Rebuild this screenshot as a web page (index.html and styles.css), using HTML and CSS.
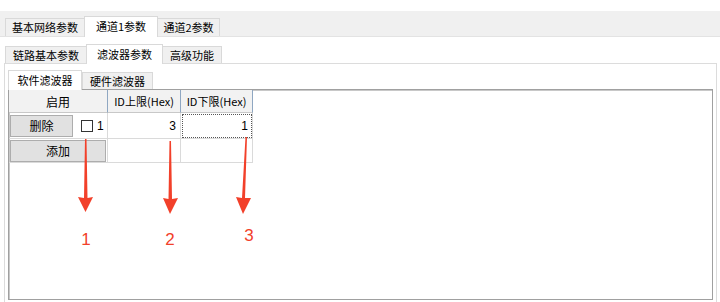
FILE: index.html
```html
<!DOCTYPE html>
<html>
<head>
  <meta charset="utf-8">
  <title>通道1参数</title>
  <link rel="stylesheet" href="styles.css">
</head>
<body>
  <div class="top-gap"></div>

  <div class="tabs tabs-main">
    <div class="tab">基本网络参数</div>
    <div class="tab active">通道1参数</div>
    <div class="tab">通道2参数</div>
  </div>

  <div class="page">
    <div class="tabs tabs-sub">
      <div class="tab">链路基本参数</div>
      <div class="tab active">滤波器参数</div>
      <div class="tab">高级功能</div>
    </div>

    <div class="panel">
      <div class="tabs tabs-filter">
        <div class="tab active">软件滤波器</div>
        <div class="tab">硬件滤波器</div>
      </div>

      <div class="grid-box">
        <div class="grid">
          <div class="hd">启用</div>
          <div class="hd sep">ID上限(Hex)</div>
          <div class="hd sep">ID下限(Hex)</div>

          <div class="cell first">
            <button class="btn small">删除</button>
            <span class="check"></span>
            <span class="idx">1</span>
          </div>
          <div class="cell num">3</div>
          <div class="cell num focus">1</div>

          <div class="cell first">
            <button class="btn wide">添加</button>
          </div>
          <div class="cell"></div>
          <div class="cell"></div>
        </div>
      </div>
    </div>
  </div>

  <!-- annotations drawn on top of the screenshot -->
  <svg class="marks" width="720" height="302" viewBox="0 0 720 302">
    <g fill="#f2402a">
      <polygon points="85,139 86.5,139 87.5,198 93,197 85.5,212 78,197 84,198"/>
      <polygon points="169.5,141 171,141 172,199 178,198 170,214 163,198 168.5,199"/>
      <polygon points="245.5,137 247,137 245,198 251,198 243,214 236,197 242,198"/>
    </g>
    <g class="num-label" fill="#f2402a">
      <text x="86" y="245">1</text>
      <text x="170" y="245">2</text>
      <text x="249" y="241">3</text>
    </g>
  </svg>
</body>
</html>
```

FILE: styles.css
```css
body {
  margin: 0;
  background: #fff;
  font-family: "Noto Sans CJK SC", "Microsoft YaHei", sans-serif;
  font-size: 11px;
  color: #000;
  position: relative;
  height: 302px;
  overflow: hidden;
}

.top-gap {
  height: 11px;
}

.tabs {
  display: flex;
  align-items: flex-end;
}
.tab {
  height: 17px;
  line-height: 17px;
  border: 1px solid #d9d9d9;
  border-bottom: none;
  background: #f0f0f0;
  white-space: nowrap;
  text-align: center;
  box-sizing: border-box;
}
.tab.active {
  height: 20px;
  line-height: 19px;
  background: #fff;
  margin: 0 -1px -1px;
  position: relative;
  z-index: 1;
}

.tabs-main {
  height: 26px;
  background: #f0f0f0;
  padding-left: 5px;
  border-bottom: 1px solid #e3e3e3;
  box-sizing: border-box;
}
.tabs-main .tab { width: 80px; height: 18px; }
.tabs-main .tab.active { width: 74px; height: 21px; }
.tabs-main .tab:last-child { width: 63px; }

.page {
  padding: 8px 3px 0 4px;
}

.tabs-sub {
  height: 18px;
  padding-left: 1px;
}
.tabs-sub .tab { width: 82px; }
.tabs-sub .tab.active { width: 77px; }
.tabs-sub .tab:last-child { width: 60px; }

.panel {
  border: 1px solid #dcdcdc;
  border-bottom: none;
  padding: 7px 3px 4px 3px;
  height: 239px;
  box-sizing: border-box;
}

.tabs-filter {
  height: 18px;
}
.tabs-filter .tab { width: 71px; }
.tabs-filter .tab.active { width: 74px; margin: 0 0 -1px 0; }

.grid-box {
  height: 209px;
  border: 1px solid #a0a0a0;
  box-shadow: inset 1px 1px 0 #c8c8c8;
  background: #fff;
}

.grid {
  display: grid;
  grid-template-columns: 99px 73px 72px;
  grid-template-rows: 23px 26px 24px;
}

.hd {
  display: flex;
  align-items: center;
  justify-content: center;
  background: #f2f2f2;
  border-bottom: 1px solid #c8c8c8;
  border-right: 1px solid #d4d4d4;
  font-size: 12px;
}
.hd.sep {
  border-left: 1px solid #8fa7c2;
  border-right: 1px solid #8fa7c2;
  margin-left: -1px;
  font-size: 11px;
}

.cell {
  border-right: 1px solid #dadada;
  border-bottom: 1px solid #dadada;
  display: flex;
  align-items: center;
  padding: 0 4px;
  font-size: 12px;
}
.cell.first {
  padding: 0 1px;
}
.cell.num {
  justify-content: flex-end;
  font-family: "Liberation Sans", sans-serif;
}
.cell.focus {
  outline: 1px dotted #555;
  outline-offset: -2px;
}

.btn {
  font-family: "Noto Sans CJK SC", sans-serif;
  font-size: 12px;
  background: #e1e1e1;
  border: 1px solid #adadad;
  padding: 0;
  margin: 0;
  height: 22px;
  color: #000;
}
.btn.small {
  width: 63px;
}
.btn.wide {
  width: 97px;
}

.check {
  width: 10px;
  height: 10px;
  border: 1px solid #333;
  background: #fff;
  margin-left: 8px;
}
.idx {
  margin-left: 4px;
  font-family: "Liberation Sans", sans-serif;
}

.marks {
  position: absolute;
  left: 0;
  top: 0;
  pointer-events: none;
}
.num-label {
  font-family: "Liberation Sans", sans-serif;
  font-size: 17px;
  text-anchor: middle;
}
```
